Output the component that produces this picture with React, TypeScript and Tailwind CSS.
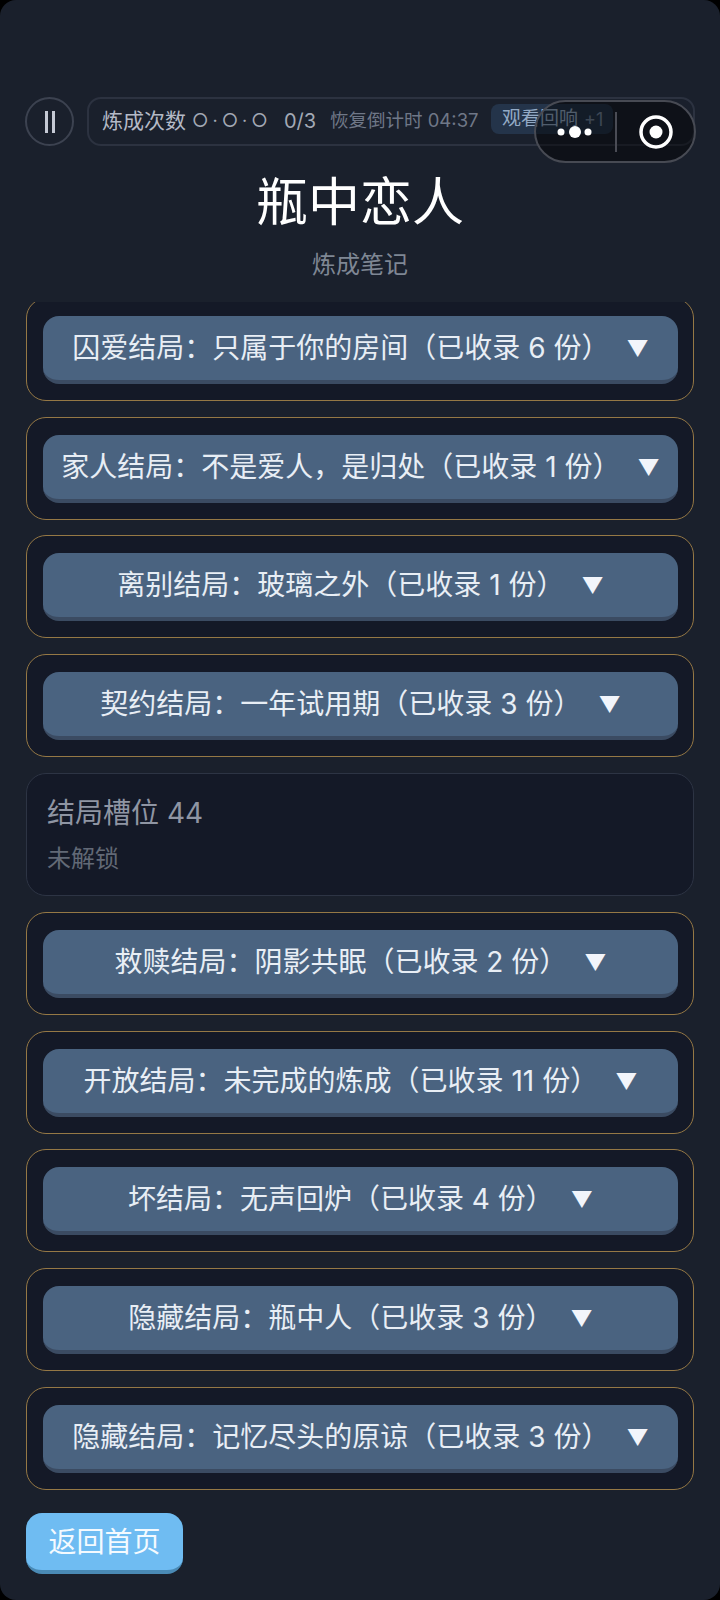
import React from "react";

const font = { fontFamily: 'Inter, "Noto Sans CJK SC", "Noto Sans", sans-serif' };

type Row =
  | { kind: "open"; label: string; count: number }
  | { kind: "locked"; label: string; note: string };

const rows: Row[] = [
  { kind: "open", label: "囚爱结局：只属于你的房间", count: 6 },
  { kind: "open", label: "家人结局：不是爱人，是归处", count: 1 },
  { kind: "open", label: "离别结局：玻璃之外", count: 1 },
  { kind: "open", label: "契约结局：一年试用期", count: 3 },
  { kind: "locked", label: "结局槽位 44", note: "未解锁" },
  { kind: "open", label: "救赎结局：阴影共眠", count: 2 },
  { kind: "open", label: "开放结局：未完成的炼成", count: 11 },
  { kind: "open", label: "坏结局：无声回炉", count: 4 },
  { kind: "open", label: "隐藏结局：瓶中人", count: 3 },
  { kind: "open", label: "隐藏结局：记忆尽头的原谅", count: 3 },
];

const EndingCard: React.FC<{ row: Row }> = ({ row }) => {
  if (row.kind === "locked") {
    return (
      <div className="h-[123.5px] shrink-0 rounded-[20px] border border-[#2d3444] bg-[#141927] pl-[20px] pt-[19px]">
        <div className="text-[28px] leading-[40px] text-[#8f95a3]">{row.label}</div>
        <div className="mt-[8px] text-[24px] leading-[36px] text-[#626976]">{row.note}</div>
      </div>
    );
  }
  return (
    <div className="h-[103px] shrink-0 rounded-[20px] border border-[#957845] bg-[#141927] pl-[16px] pr-[15px] pt-[17px]">
      <div className="flex h-[68px] items-center justify-center rounded-[16px] border-b-4 border-[#3b4b62] bg-[#4a6380] text-[28px] text-[#e8eef5]">
        <span>
          {row.label}（已收录 {row.count} 份）
        </span>
        <span className="ml-[17px] text-[22px] leading-none text-[#f2f5fb]">▼</span>
      </div>
    </div>
  );
};

export default function App() {
  return (
    <div className="h-[1600px] w-[720px] bg-black" style={font}>
      <div className="relative flex h-full flex-col overflow-hidden rounded-[16px] bg-[#1a202c] pt-[97px]">
        {/* top status row */}
        <div className="flex h-[49px] shrink-0 gap-[13px] px-[25px]">
          <div className="flex h-[49px] w-[49px] shrink-0 items-center justify-center gap-[4px] rounded-full border-2 border-[#3c4250]">
            <span className="h-[22px] w-[3px] bg-[#c5c9d4]" />
            <span className="h-[22px] w-[3px] bg-[#c5c9d4]" />
          </div>
          <div className="flex h-[49px] flex-1 items-center rounded-[14px] border-2 border-[#2c3240] pb-[2px] pl-[13px]">
            <span className="w-[84px] text-[21px] text-[#b4bac6]">炼成次数</span>
            <span className="ml-[6px] w-[84px] whitespace-nowrap text-[18px] tracking-[4px] text-[#a3a9b5]">○·○·○</span>
            <span className="ml-[8px] w-[33px] text-[20px] text-[#a3a9b5]">0/3</span>
            <span className="ml-[13px] w-[150px] whitespace-nowrap text-[18.5px] text-[#6f7787]">恢复倒计时 04:37</span>
            <span className="mb-[3px] ml-[11px] flex h-[30px] w-[122px] items-center whitespace-nowrap rounded-[8px] bg-[#24344a] pl-[11px] text-[19px] text-[#93aac5]">
              观看回响<span className="ml-[6px] text-[18px] text-[#6f8199]">+1</span>
            </span>
          </div>
        </div>

        {/* mini program capsule */}
        <div className="absolute left-[534px] top-[100px] flex h-[63px] w-[162px] items-center rounded-full border-2 border-[#474a53] bg-black/45">
          <svg width="158" height="59" viewBox="0 0 158 59" className="shrink-0">
            <circle cx="25" cy="30" r="3.5" fill="#fff" />
            <circle cx="39" cy="30" r="6" fill="#fff" />
            <circle cx="52" cy="30" r="3.5" fill="#fff" />
            <rect x="79" y="10" width="2" height="40" fill="#4a4c55" />
            <circle cx="120" cy="30" r="15" fill="none" stroke="#fff" strokeWidth="3.5" />
            <circle cx="120" cy="30" r="6.5" fill="#fff" />
          </svg>
        </div>

        <h1 className="mt-[26px] h-[62px] shrink-0 text-center text-[52px] leading-[62px] text-white">瓶中恋人</h1>
        <p className="mt-[13px] h-[36px] shrink-0 text-center text-[24px] leading-[36px] text-[#7f8794]">炼成笔记</p>

        {/* endings list, scrolled a little */}
        <div className="mx-[26px] mt-[19px] h-[1188px] shrink-0 overflow-hidden">
          <div className="-mt-[4px] flex flex-col gap-[15.7px]">
            {rows.map((row, i) => (
              <EndingCard key={i} row={row} />
            ))}
          </div>
        </div>

        <button className="ml-[26px] mt-[23px] h-[61px] w-[157px] shrink-0 rounded-[16px] border-b-4 border-[#4a8ab5] bg-[#6fbcf2] text-[28px] text-[#f4faff]">
          返回首页
        </button>
      </div>
    </div>
  );
}
